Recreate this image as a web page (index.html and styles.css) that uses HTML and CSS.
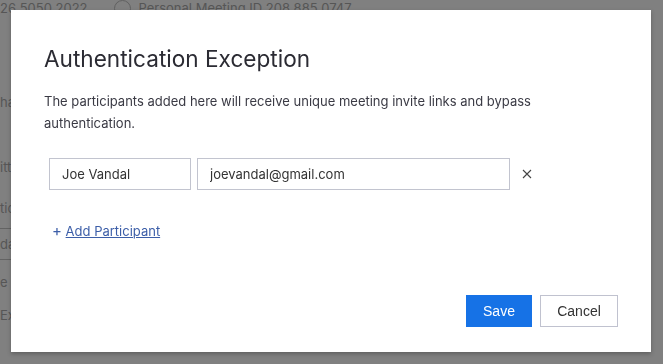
FILE: index.html
```html
<!DOCTYPE html>
<html lang="en">
<head>
  <meta charset="UTF-8" />
  <meta name="viewport" content="width=device-width, initial-scale=1.0"/>
  <title>Authentication Exception</title>
  <link rel="stylesheet" href="styles.css">
</head>
<body>
  <!-- page behind the dialog -->
  <div class="page">
    <div class="page-top">
      <span class="meeting-id">26 5050 2022</span>
      <span class="radio"></span>
      <span>Personal Meeting ID 208 885 0747</span>
    </div>
    <div class="page-rows">
      <div class="row r1">ha</div>
      <div class="row r2">itt</div>
      <div class="row r3">tic</div>
      <div class="row r4 ruled">da</div>
      <div class="row r5">e</div>
      <div class="row r6">Ex</div>
    </div>
  </div>

  <!-- Modal -->
  <div class="overlay"></div>
  <div class="modal">
    <h2 class="modal-title">Authentication Exception</h2>
    <p class="modal-desc">The participants added here will receive unique meeting invite links and bypass authentication.</p>

    <div class="participant">
      <input class="field name" type="text" value="Joe Vandal" />
      <input class="field email" type="text" value="joevandal@gmail.com" />
      <button class="remove" title="Remove">
        <svg width="10" height="10" viewBox="0 0 10 10"><path d="M1 1 L9 9 M9 1 L1 9" stroke="#444" stroke-width="1.1" fill="none"/></svg>
      </button>
    </div>

    <a href="#" class="add-link"><span class="plus">+</span> <span class="add-text">Add Participant</span></a>

    <div class="modal-footer">
      <button class="btn primary">Save</button>
      <button class="btn secondary">Cancel</button>
    </div>
  </div>
</body>
</html>
```

FILE: styles.css
```css
body {
  margin: 0;
  font-family: Inter, "Noto Sans", Arial, sans-serif;
  background: #808080;
  color: #333;
  width: 663px;
  height: 364px;
  overflow: hidden;
}
.page {
  color: #4f4f4f;
  font-size: 13px;
}
.page-top {
  display: flex;
  align-items: center;
  gap: 8px;
  height: 22px;
  margin-top: -3px;
  white-space: nowrap;
}
.meeting-id {
  margin-right: 18px;
}
.radio {
  width: 15px;
  height: 15px;
  border: 1px solid #5c5c5c;
  border-radius: 50%;
}
.page-rows {
  width: 40px;
  white-space: nowrap;
}
.row {
  height: 18px;
  line-height: 18px;
}
.r1 { margin-top: 74px; }
.r2 { margin-top: 47px; }
.r3 { margin-top: 23px; }
.r4 { margin-top: 11px; }
.r5 { margin-top: 13px; }
.r6 { margin-top: 15px; }
.ruled {
  border-top: 1px solid #5e5e5e;
  border-bottom: 1px solid #5e5e5e;
  padding: 6px 0 6px;
}
.overlay {
  position: fixed;
  top: 0; left: 0;
  width: 100%; height: 100%;
  background: rgba(128,128,128,0.15);
}
.modal {
  position: fixed;
  top: 10px;
  left: 11px;
  width: 640px;
  height: 342px;
  box-sizing: border-box;
  background: white;
  padding: 33px 33px 0;
  box-shadow: 0 2px 4px rgba(0,0,0,0.25);
  display: flex;
  flex-direction: column;
}
.modal-title {
  margin: 0;
  font-weight: 400;
  font-size: 22.6px;
  line-height: 32px;
  color: #2b2b33;
}
.modal-desc {
  margin: 15px 0 0;
  font-size: 13px;
  line-height: 22px;
  color: #3a3a44;
  width: 520px;
}
.participant {
  display: flex;
  align-items: center;
  gap: 6px;
  margin-top: 24px;
  margin-left: 5px;
}
.field {
  height: 32px;
  box-sizing: border-box;
  border: 1px solid #c2c4cf;
  padding: 0 12px;
  font-family: inherit;
  font-size: 13px;
  color: #333;
  outline: none;
}
.field.name { width: 142px; }
.field.email { width: 313px; }
.remove {
  background: none;
  border: none;
  padding: 0;
  margin-left: 1px;
  width: 20px;
  height: 20px;
  display: flex;
  align-items: center;
  justify-content: center;
  cursor: pointer;
}
.add-link {
  margin-top: 31px;
  margin-left: 8px;
  font-size: 13px;
  color: #3c5ea8;
  text-decoration: none;
  align-self: flex-start;
}
.add-link .add-text {
  text-decoration: underline;
}
.add-link .plus {
  font-size: 15px;
}
.modal-footer {
  margin-top: auto;
  margin-bottom: 25px;
  display: flex;
  justify-content: flex-end;
  gap: 8px;
}
.btn {
  height: 32px;
  font-family: "Liberation Sans", Arial, sans-serif;
  font-size: 14px;
  cursor: pointer;
  box-sizing: border-box;
  padding: 0;
}
.btn.primary {
  background: #1672e6;
  color: white;
  border: none;
  width: 66px;
}
.btn.secondary {
  background: white;
  color: #333;
  border: 1px solid #c0c2cf;
  width: 78px;
}
```
